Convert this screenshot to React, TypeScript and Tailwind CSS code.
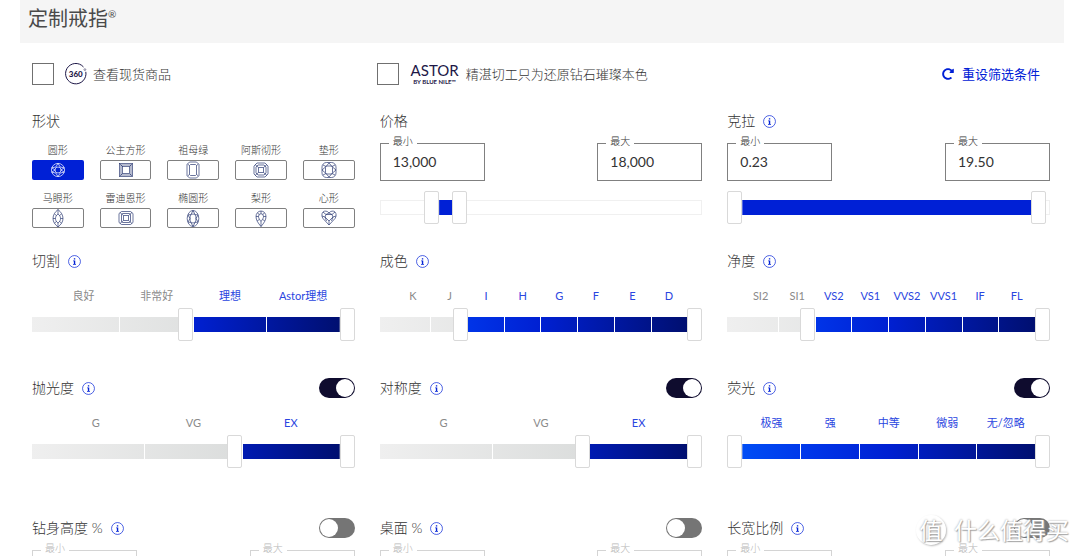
import { ReactNode, useId, useState } from "react";
import { FaRedoAlt } from "react-icons/fa";

type Shape = { name: string; icon: ReactNode };

const shapes: Shape[] = [
  {
    name: "圆形",
    icon: (
      <>
        <circle cx="9" cy="9" r="6.6" />
        <circle cx="9" cy="9" r="3" />
        <path d="M9 2.4 11.2 6 15.2 6.8 12 9 15.2 11.2 11.2 12 9 15.6 6.8 12 2.8 11.2 6 9 2.8 6.8 6.8 6Z" />
      </>
    ),
  },
  {
    name: "公主方形",
    icon: (
      <>
        <rect x="2.5" y="2.5" width="13" height="13" />
        <rect x="5.5" y="5.5" width="7" height="7" />
        <path d="m2.5 2.5 3 3M15.5 2.5l-3 3M2.5 15.5l3-3M15.5 15.5l-3-3M4 4h10v10H4Z" />
      </>
    ),
  },
  {
    name: "祖母绿",
    icon: (
      <>
        <path d="M5.5 1h7L15 3.5v11L12.500 17h-7L3 14.500v-11Z" />
        <path d="M6.500 3.500h5L12.500 4.500v9L11.500 14.500h-5L5.500 13.500v-9Z" />
        <path d="m3.500 3 2 1.500M14.500 3l-2 1.500M3.500 15l2-1.500M14.500 15l-2-1.500" />
      </>
    ),
  },
  {
    name: "阿斯彻形",
    icon: (
      <>
        <path d="M5 2h8l3 3v8l-3 3H5l-3-3V5Z" />
        <path d="M6 4h6l2 2v6l-2 2H6l-2-2V6Z" />
        <path d="M6.500 6.500h5v5h-5ZM3 3.500l3.500 3M15 3.500l-3.500 3M3 14.500l3.500-3M15 14.500l-3.500-3" />
      </>
    ),
  },
  {
    name: "垫形",
    icon: (
      <>
        <rect x="2" y="1.500" width="14" height="15" rx="4.500" />
        <rect x="5.500" y="5" width="7" height="8" rx="1.500" />
        <path d="M3 4 6 5.500 9 2l3 3.500L15 4M3 14l3-1.500L9 16l3-3.500 3 1.500M2 9l3.500-3M2 9l3.500 3M16 9l-3.500-3M16 9l-3.500 3" />
      </>
    ),
  },
  {
    name: "马眼形",
    icon: (
      <>
        <path d="M9 .5C12 3 14 6 14 9.500S12 15.500 9 18C6 15.500 4 13 4 9.500S6 3 9 .5Z" />
        <path d="M9 5c2 1.500 2.500 3 2.500 4.500S11 12.500 9 14c-2-1.500-2.500-3-2.500-4.500S7 6.500 9 5Z" />
        <path d="M9 .5V5M9 14v4M4 9.500h2.500M14 9.500h-2.500M5.500 5l2 1.500M12.500 5l-2 1.500M5.500 14l2-1.500M12.500 14l-2-1.500" />
      </>
    ),
  },
  {
    name: "雷迪恩形",
    icon: (
      <>
        <path d="M4.500 2.500h9l2.500 2v9l-2.500 2h-9l-2.500-2v-9Z" />
        <path d="M5.500 4.500h7l1 1v7l-1 1h-7l-1-1v-7Z" />
        <path d="M6.500 6.500h5v5h-5ZM3 3.500l3.500 3M15 3.500l-3.500 3M3 14.500l3.500-3M15 14.500l-3.500-3" />
      </>
    ),
  },
  {
    name: "椭圆形",
    icon: (
      <>
        <ellipse cx="9" cy="9.500" rx="5.800" ry="8" />
        <ellipse cx="9" cy="9.500" rx="3" ry="4.500" />
        <path d="m9 1.500 2 4 3 .5-2 3.500 2 3.500-3 .5-2 4-2-4-3-.5 2-3.500L4 6l3-.5Z" />
      </>
    ),
  },
  {
    name: "梨形",
    icon: (
      <>
        <path d="M9 17.500C6 14 4 11 4 7.500a5 5.500 0 0 1 10 0c0 3.500-2 6.500-5 10Z" />
        <path d="M9 12.500C7.500 10.500 6.500 9 6.500 7.500a2.500 2.800 0 0 1 5 0c0 1.500-1 3-2.500 5Z" />
        <path d="M9 2v2.700M9 12.500v5M4 7.500h2.500M14 7.500h-2.500M5.500 4l1.800 1.500M12.500 4l-1.800 1.500M5.200 12l2-1.500M12.800 12l-2-1.500" />
      </>
    ),
  },
  {
    name: "心形",
    icon: (
      <>
        <path d="M9 4C7.500 1.800 4.500 1.500 3 3S1.500 7.500 3 9.500L9 16l6-6.500C16.500 7.500 16.500 4.500 15 3S10.500 1.800 9 4Z" />
        <path d="M6 5.500h6l1 2.500-4 4-4-4Z" />
        <path d="m3 3 3 2.500L9 4l3 1.500L15 3M2 7l3 1M16 7l-3 1M9 12v4M5 8l1.500 4M13 8l-1.500 4" />
      </>
    ),
  },
];

function InfoButton({ label }: { label: string }) {
  return (
    <button type="button" aria-label={label} className="text-[#0020d6]">
      <svg viewBox="0 0 14 14" className="size-[13px]" fill="none">
        <circle cx="7" cy="7" r="6.400" stroke="currentColor" strokeWidth="0.750" />
        <path
          d="M6.300 3.400h1.500v1.400H6.300ZM5.500 5.800h2.300v3.800h.8v.8H5.400v-.8h.9V6.600h-.8Z"
          fill="currentColor"
        />
      </svg>
    </button>
  );
}

function Toggle({ label, on }: { label: string; on: boolean }) {
  return (
    <input
      type="checkbox"
      role="switch"
      aria-label={label}
      defaultChecked={on}
      className="ml-auto h-5 w-9 appearance-none rounded-full bg-[#757575] p-px before:block before:size-[18px] before:rounded-full before:bg-white checked:bg-[#0f0c2e] checked:before:ml-4"
    />
  );
}

interface HeadingProps {
  title: string;
  info?: boolean;
  toggle?: boolean;
}

function Heading({ title, info = true, toggle }: HeadingProps) {
  return (
    <div className="flex h-5 items-center gap-2">
      <h2 className="text-[14px] leading-5">{title}</h2>
      {info && <InfoButton label={title} />}
      {toggle !== undefined && <Toggle label={title} on={toggle} />}
    </div>
  );
}

interface RangeSliderProps {
  title: string;
  low: number;
  high: number;
  steps?: number;
}

const thumb =
  "pointer-events-none relative col-start-1 row-start-1 h-[33px] appearance-none bg-transparent [&::-webkit-slider-thumb]:pointer-events-auto [&::-webkit-slider-thumb]:h-[33px] [&::-webkit-slider-thumb]:w-[15px] [&::-webkit-slider-thumb]:appearance-none [&::-webkit-slider-thumb]:rounded-xs [&::-webkit-slider-thumb]:border [&::-webkit-slider-thumb]:border-[#d9d9d9] [&::-webkit-slider-thumb]:bg-white";

// The low thumb stops one thumb width before the end, the high thumb starts one in.
function RangeSlider({ title, low, high, steps }: RangeSliderProps) {
  const [from, setFrom] = useState(low);
  const [to, setTo] = useState(high);

  return (
    <div className="grid grid-cols-1 items-center">
      <div
        className={
          steps
            ? "col-start-1 row-start-1 h-[15px] bg-linear-to-r from-[#efefef] to-[#d0d3d2] px-[15px]"
            : "col-start-1 row-start-1 h-[15px] px-[15px] ring-1 ring-[#f0f0f0] ring-inset"
        }
      >
        <div className="grid h-full">
          <div
            className={
              steps
                ? "col-start-1 row-start-1 bg-[linear-gradient(to_right,#004df5,#0034e8_25%,#0020d2_50%,#000f70)]"
                : "col-start-1 row-start-1 bg-[#0020d6]"
            }
            style={{ clipPath: `inset(0 ${100 - to}% 0 ${from}%)` }}
          />
          {steps && (
            <div className="relative col-start-1 row-start-1 flex">
              {Array.from({ length: steps }, (_, i) => (
                <span key={i} className="flex-1 border-l border-white first:border-l-0" />
              ))}
            </div>
          )}
        </div>
      </div>
      <input
        type="range"
        step="any"
        aria-label={`${title} 最小`}
        value={from}
        onChange={(e) => setFrom(Math.min(Number(e.target.value), to))}
        className={`${thumb} mr-[15px]`}
      />
      <input
        type="range"
        step="any"
        aria-label={`${title} 最大`}
        value={to}
        onChange={(e) => setTo(Math.max(Number(e.target.value), from))}
        className={`${thumb} ml-[15px]`}
      />
    </div>
  );
}

interface NumberFieldProps {
  label: string;
  value: string;
  disabled?: boolean;
}

function NumberField({ label, value, disabled }: NumberFieldProps) {
  const id = useId();
  return (
    <fieldset
      className={
        disabled
          ? "w-[105px] border border-[#d4d4d4] px-2 pb-2 text-[#b8b8b8]"
          : "w-[105px] border border-[#808080] px-2 pb-2"
      }
    >
      <legend className="px-1 pb-1 text-[10px] leading-[10px]">
        <label htmlFor={id} className="block">
          {label}
        </label>
      </legend>
      <input
        id={id}
        type="text"
        defaultValue={value}
        disabled={disabled}
        className="block h-[22px] w-full bg-transparent px-1 text-[14px] font-normal outline-none"
      />
    </fieldset>
  );
}

function NumberPair({ min, max, disabled }: { min: string; max: string; disabled?: boolean }) {
  return (
    <div className="mt-[5px] flex justify-between">
      <NumberField label="最小" value={min} disabled={disabled} />
      <NumberField label="最大" value={max} disabled={disabled} />
    </div>
  );
}

interface GradeFilterProps {
  title: string;
  grades: string[];
  start: number; // index of the first selected grade
  toggle?: boolean;
}

function GradeFilter({ title, grades, start, toggle }: GradeFilterProps) {
  return (
    <section>
      <Heading title={title} toggle={toggle} />
      <div className="mt-[17px] mb-1 flex px-[15px] text-[11px] leading-4 font-normal">
        {grades.map((grade, i) => (
          <span
            key={grade}
            className={
              i < start
                ? "flex flex-1 basis-0 justify-center whitespace-nowrap text-[#8a8a8a]"
                : "flex flex-1 basis-0 justify-center whitespace-nowrap text-[#2a45e0]"
            }
          >
            {grade}
          </span>
        ))}
      </div>
      <RangeSlider
        title={title}
        low={(start / grades.length) * 100}
        high={100}
        steps={grades.length}
      />
    </section>
  );
}

function ShapePicker() {
  const [selected, setSelected] = useState("圆形");
  return (
    <section>
      <Heading title="形状" info={false} />
      <div className="mt-3 grid grid-cols-5 gap-x-4 gap-y-[11px]">
        {shapes.map((shape) => (
          <button
            key={shape.name}
            type="button"
            aria-pressed={selected === shape.name}
            onClick={() => setSelected(shape.name)}
            className="flex flex-col items-stretch gap-[3px] text-[10px] leading-[14px]"
          >
            <span className="whitespace-nowrap">{shape.name}</span>
            <span
              className={
                selected === shape.name
                  ? "flex h-5 items-center justify-center rounded-xs bg-[#0020d6] text-white"
                  : "flex h-5 items-center justify-center rounded-xs border border-[#808080] text-[#2b3a73]"
              }
            >
              <svg
                viewBox="0 0 18 18"
                className="size-[18px]"
                fill="none"
                stroke="currentColor"
                strokeWidth="0.700"
              >
                {shape.icon}
              </svg>
            </span>
          </button>
        ))}
      </div>
    </section>
  );
}

function View360Icon() {
  return (
    <svg viewBox="0 0 22 22" className="size-[22px] text-[#1d1747]" fill="none">
      <path d="M20.800 8.800A10.200 10.200 0 1 1 18.500 4" stroke="currentColor" strokeWidth="1" />
      <circle cx="19.900" cy="6.600" r="0.900" stroke="currentColor" strokeWidth="0.500" />
      <text
        x="10.800"
        y="14"
        textAnchor="middle"
        fill="currentColor"
        className="font-[Lato] text-[8px] font-black"
      >
        360
      </text>
    </svg>
  );
}

function AstorLogo() {
  return (
    <span className="flex w-[50px] flex-col items-center text-[#1d1747]">
      <span className="text-[15px] leading-[14px] font-normal">ASTOR</span>
      <span className="mt-[2px] text-[6px] leading-[6px] font-bold whitespace-nowrap">
        BY BLUE NILE™
      </span>
    </span>
  );
}

function CheckOption({ icon, children }: { icon: ReactNode; children: ReactNode }) {
  return (
    <label className="flex items-center">
      <input
        type="checkbox"
        className="size-[22px] shrink-0 appearance-none border border-[#707070] checked:bg-[#0020d6]"
      />
      <span className="ml-[11px] flex items-center gap-[6px] whitespace-nowrap">
        {icon}
        {children}
      </span>
    </label>
  );
}

function Watermark() {
  return (
    <div
      aria-hidden="true"
      className="pointer-events-none absolute right-[11px] bottom-[10px] flex items-center gap-2 text-[23px] leading-8 font-normal text-white [text-shadow:0_0_2px_#999,1px_1px_1px_#aaa]"
    >
      <span className="flex size-[30px] items-center justify-center rounded-full bg-white/40 shadow-[1px_1px_2px_#bbb]">
        值
      </span>
      <span>什么值得买</span>
    </div>
  );
}

const row = "grid grid-cols-3 gap-x-[25px]";

export default function App() {
  return (
    <div className="relative h-screen overflow-hidden bg-white font-[Lato,'Noto_Sans_CJK_SC',sans-serif] font-light text-[#333]">
      <header className="mr-4 ml-5 bg-[#f5f5f5] px-2 pt-1 pb-[11px]">
        <h1 className="flex text-[20px] leading-7 font-normal text-[#4a4a4a]">
          定制戒指<span className="text-[10px] leading-5">®</span>
        </h1>
      </header>

      <main className="pt-5 pr-[30px] pl-8">
        <div className="grid grid-cols-3 gap-x-4 text-[13px] leading-[22px]">
          <CheckOption icon={<View360Icon />}>查看现货商品</CheckOption>
          <CheckOption icon={<AstorLogo />}>精湛切工只为还原钻石璀璨本色</CheckOption>
          <button
            type="button"
            className="mr-[10px] flex items-center gap-2 justify-self-end font-normal text-[#0020d6]"
          >
            <FaRedoAlt className="size-3" />
            重设筛选条件
          </button>
        </div>

        <div className={`${row} mt-[26px]`}>
          <ShapePicker />
          <section>
            <Heading title="价格" info={false} />
            <NumberPair min="13,000" max="18,000" />
            <div className="mt-[10px]">
              <RangeSlider title="价格" low={15.2} high={19.7} />
            </div>
          </section>
          <section>
            <Heading title="克拉" />
            <NumberPair min="0.23" max="19.50" />
            <div className="mt-[10px]">
              <RangeSlider title="克拉" low={0} high={98.7} />
            </div>
          </section>
        </div>

        <div className={`${row} mt-[23px]`}>
          <GradeFilter title="切割" grades={["良好", "非常好", "理想", "Astor理想"]} start={2} />
          <GradeFilter title="成色" grades={["K", "J", "I", "H", "G", "F", "E", "D"]} start={2} />
          <GradeFilter
            title="净度"
            grades={["SI2", "SI1", "VS2", "VS1", "VVS2", "VVS1", "IF", "FL"]}
            start={2}
          />
        </div>

        <div className={`${row} mt-[37px]`}>
          <GradeFilter title="抛光度" grades={["G", "VG", "EX"]} start={2} toggle />
          <GradeFilter title="对称度" grades={["G", "VG", "EX"]} start={2} toggle />
          <GradeFilter
            title="荧光"
            grades={["极强", "强", "中等", "微弱", "无/忽略"]}
            start={0}
            toggle
          />
        </div>

        <div className={`${row} mt-[50px]`}>
          {["钻身高度 %", "桌面 %", "长宽比例"].map((title) => (
            <section key={title}>
              <Heading title={title} toggle={false} />
              <NumberPair min="" max="" disabled />
            </section>
          ))}
        </div>
      </main>

      <Watermark />
    </div>
  );
}
